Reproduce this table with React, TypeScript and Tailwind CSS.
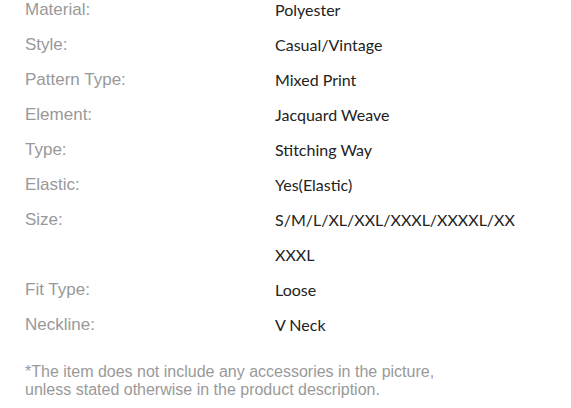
const SPECS: { label: string; value: string }[] = [
  { label: 'Material:', value: 'Polyester' },
  { label: 'Style:', value: 'Casual/Vintage' },
  { label: 'Pattern Type:', value: 'Mixed Print' },
  { label: 'Element:', value: 'Jacquard Weave' },
  { label: 'Type:', value: 'Stitching Way' },
  { label: 'Elastic:', value: 'Yes(Elastic)' },
  { label: 'Size:', value: 'S/M/L/XL/XXL/XXXL/XXXXL/XXXXXL' },
  { label: 'Fit Type:', value: 'Loose' },
  { label: 'Neckline:', value: 'V Neck' },
];

export default function App() {
  return (
    <div className="w-[571px] h-[408px] overflow-hidden bg-white">
      <div className="px-[25px] -mt-[8px]">
        {SPECS.map(spec => (
          <div key={spec.label} className="flex leading-[35px]">
            <div className="w-[250px] shrink-0 text-[17px] text-[#999] font-['Liberation_Sans',Arial,sans-serif]">
              {spec.label}
            </div>
            <div className="w-[246px] break-all text-[16px] text-[#222] font-['Lato','Open_Sans',sans-serif]">
              {spec.value}
            </div>
          </div>
        ))}

        {/* disclaimer */}
        <p className="mt-[21px] text-[16px] leading-[18px] text-[#999] font-['Liberation_Sans',Arial,sans-serif]">
          *The item does not include any accessories in the picture,
          <br />
          unless stated otherwise in the product description.
        </p>
      </div>
    </div>
  );
}
